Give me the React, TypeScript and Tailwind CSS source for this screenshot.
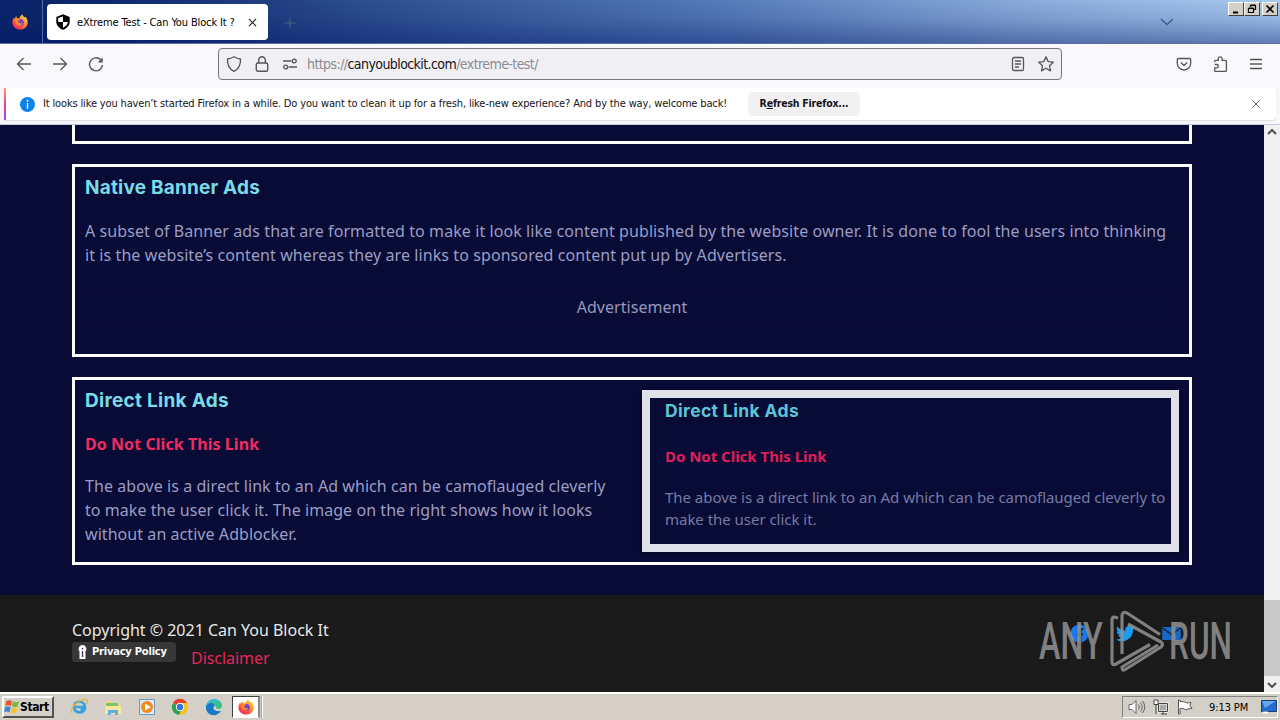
import React from "react";

const ui = "font-['DejaVu_Sans_Condensed','DejaVu_Sans',sans-serif] [font-stretch:condensed]";

function Firefox({ className }: { className: string }) {
  return (
    <svg viewBox="0 0 16 16" className={className}>
      <defs>
        <linearGradient id="ffBody" x1="0.9" y1="0" x2="0.2" y2="1">
          <stop offset="0" stopColor="#ffe14a" />
          <stop offset="0.4" stopColor="#ff9a2a" />
          <stop offset="0.75" stopColor="#ff4a3c" />
          <stop offset="1" stopColor="#e8206e" />
        </linearGradient>
      </defs>
      <path d="M8 15.6C3.7 15.6.4 12.500.4 8.300c0-1.900.7-3.700 1.700-4.700l.5 1.300C3 3.600 3.800 2.600 4.500 2.200l.4 1.700 2.300.5C8 2.600 9 1.200 10.500.2c.2 1.900 1.200 2.300 2 3.100l.8-.6c1.500 1.500 2.400 3.500 2.400 5.700 0 4.200-3.400 7.200-7.700 7.200z" fill="url(#ffBody)" />
      <circle cx="8.300" cy="8.600" r="3.500" fill="#7a3fd0" />
      <path d="M3.600 5.400c1.600-1 3.100-.6 4.500.2-.3.9-1.800 1-1.900 1.900 0 1.800 2.500 2.500 4.200 1.200-.4 2.300-2.600 3.300-4.600 2.600C3.800 10.500 3 7.900 3.600 5.400z" fill="#ff8a1f" />
    </svg>
  );
}

function WinButton({ children }: { children: React.ReactNode }) {
  return (
    <div className="flex h-[14px] w-4 items-center justify-center border border-t-white border-l-white border-r-[#404040] border-b-[#404040] bg-[#d4d0c8]">
      <svg viewBox="0 0 12 12" className="h-3 w-3 shrink-0" fill="none" stroke="#000">
        {children}
      </svg>
    </div>
  );
}

function TabBar() {
  return (
    <div className="flex h-11 shrink-0 items-start border-b border-[#5a6da0] bg-[linear-gradient(180deg,rgba(255,255,255,0)_0%,rgba(0,20,90,0.12)_45%,rgba(0,20,100,0.42)_100%),linear-gradient(90deg,#0a246a_0%,#0d276d_8%,#2a4b8d_27%,#5379b8_55%,#89abdb_80%,#a6caf0_100%)]">
      <div className="flex h-[43px] w-[43px] items-center border-r border-[#5468a0] pl-3">
        <Firefox className="h-4 w-4" />
      </div>
      <div className="mt-1 ml-1 flex h-9 w-[221px] items-center rounded bg-white pl-2">
        <svg viewBox="0 0 16 16" className="h-4 w-4 shrink-0">
          <path d="M8 .3l6.700 2.600v4.600c0 4-2.700 6.800-6.700 8.300-4-1.500-6.700-4.300-6.700-8.300V2.900z" fill="#000" />
          <path d="M8 2.400V8H3.200V4.100zM8 8h4.800c-.3 2.800-2.200 4.700-4.800 5.800z" fill="#fff" />
        </svg>
        <span className={`${ui} ml-[6px] w-[159px] pt-[2px] text-[11px] tracking-[-0.14px] whitespace-nowrap text-black`}>eXtreme Test - Can You Block It ?</span>
        <svg viewBox="0 0 10 10" className="ml-[12px] h-[9px] w-[9px]" stroke="#222" strokeWidth="1.200">
          <path d="M1 1l8 8M9 1L1 9" />
        </svg>
      </div>
      <svg viewBox="0 0 12 12" className="mt-[17px] ml-4 h-3 w-3" stroke="#4c6283">
        <path d="M6 .5v11M.5 6h11" />
      </svg>
      <svg viewBox="0 0 14 8" className="mt-[18px] ml-auto h-2 w-[14px]" fill="none" stroke="#3f5d8d" strokeWidth="1.500">
        <path d="M1 1l6 5.500L13 1" />
      </svg>
      <div className="mt-[2px] mr-[2px] ml-[54px] flex">
        <WinButton><path d="M3 9.500h5" strokeWidth="2" /></WinButton>
        <WinButton><path d="M4.500 4V2.500h5v4H8M4.500 2.200h5M2.500 5.500h5v4h-5zM2.500 5h5" strokeWidth="1.200" /></WinButton>
        <div className="w-[2px]" />
        <WinButton><path d="M2.500 2.500l7 7M9.500 2.500l-7 7" strokeWidth="1.700" /></WinButton>
      </div>
    </div>
  );
}

const line = "h-4 w-4 shrink-0 overflow-visible fill-none stroke-[#55555d]";

function Toolbar() {
  return (
    <div className="flex h-[44px] shrink-0 items-start bg-[#f9f9fb] pt-1">
      <div className="flex h-8 items-center">
        <svg viewBox="0 0 16 16" className={`${line} ml-4`} strokeWidth="1.300"><path d="M15 8H1.500M7.500 2l-6 6 6 6" /></svg>
        <svg viewBox="0 0 16 16" className={`${line} ml-5`} strokeWidth="1.300"><path d="M1 8h13.500M8.500 2l6 6-6 6" /></svg>
        <svg viewBox="0 0 16 16" className={`${line} ml-5`} strokeWidth="1.400"><path d="M14.500 9A6.500 6.500 0 1 1 12.700 3.800" /><path d="M14.700 1.500v5H9.700z" fill="#55555d" stroke="none" /></svg>
        <div className="ml-[114px] flex h-8 w-[844px] items-center rounded border border-[#77777d] bg-[#f0f0f4] pl-[7px]">
          <svg viewBox="0 0 16 16" className={line} strokeWidth="1.300"><path d="M8 .8c2 1.300 4 2 6.500 2.200.3 6-1.500 10-6.500 12.300C3 13 1.200 9 1.500 3 4 2.800 6 2.100 8 .8z" strokeLinejoin="round" /></svg>
          <svg viewBox="0 0 16 16" className={`${line} ml-3`} strokeWidth="1.400"><rect x="2.300" y="7" width="11.400" height="8.200" rx="1.500" /><path d="M4.700 7V4.300a3.300 3.500 0 0 1 6.600 0V7" /></svg>
          <svg viewBox="0 0 16 16" className={`${line} ml-3`} strokeWidth="1.300"><path d="M1 5h8.500M6.500 11H15" /><circle cx="12.300" cy="5" r="1.900" /><circle cx="3.700" cy="11" r="1.900" /></svg>
          <span className={`${ui} ml-[9px] text-[14px] leading-5 tracking-[-0.58px] whitespace-nowrap text-[#8b8b91]`}>
            https://<span className="text-[#15141a]">canyoublockit.com</span>/extreme-test/
          </span>
          <svg viewBox="0 0 16 16" className={`${line} mr-3 ml-auto`} strokeWidth="1.300"><rect x="2.500" y="1.500" width="11" height="13" rx="1.500" /><path d="M5 5h6M5 8h6M5 11h4" /></svg>
          <svg viewBox="0 0 16 16" className={`${line} mr-[7px]`} strokeWidth="1.300"><path d="M8 .9l2.200 4.700 5.100.6-3.800 3.500 1 5.200L8 12.300l-4.500 2.600 1-5.200L.7 6.200l5.100-.6z" strokeLinejoin="round" /></svg>
        </div>
        <svg viewBox="0 0 16 16" className={`${line} ml-[114px]`} strokeWidth="1.300"><path d="M2.500 2.500h11q1.200 0 1.200 1.200v3.600a6.700 6.700 0 0 1-13.400 0V3.700q0-1.200 1.200-1.200zM4.800 6.500L8 9.500l3.200-3" strokeLinejoin="round" /></svg>
        <svg viewBox="0 0 16 16" className={`${line} ml-[21px]`} strokeWidth="1.300"><path d="M1.700 6.200V5.300q0-1 1-1h2.600V2.700a1.900 1.900 0 0 1 3.800 0v1.600h3.300q1 0 1 1v9.100q0 1-1 1H2.700q-1 0-1-1v-2.600h2a1.600 1.600 0 0 0 0-3.300h-2" /></svg>
        <svg viewBox="0 0 16 16" className={`${line} ml-[19px]`} strokeWidth="1.300"><path d="M2 3.500h12M2 8h12M2 12.500h12" /></svg>
      </div>
    </div>
  );
}

function Notification() {
  return (
    <div className="flex h-[37px] shrink-0 items-start border-b border-[#c4cbe0] bg-[#f7f7f9] pl-1">
      <div className="flex h-8 w-[1272px] items-center rounded-r bg-white shadow-[0_1px_1px_#ddd]">
        <div className="h-8 w-[2px] bg-[linear-gradient(#ff9a5a,#e0419c,#9b4fe0)]" />
        <svg viewBox="0 0 16 16" className="ml-[14px] h-[15px] w-[15px]"><circle cx="8" cy="8" r="8" fill="#0a84e8" /><path d="M8 3v2M8 6.500v6" stroke="#fff" strokeWidth="1.400" /></svg>
        <span className={`${ui} ml-2 w-[684px] text-[11px] tracking-[-0.148px] whitespace-nowrap text-[#15141a]`}>
          It looks like you haven’t started Firefox in a while. Do you want to clean it up for a fresh, like-new experience? And by the way, welcome back!
        </span>
        <div className={`${ui} ml-[21px] flex h-6 w-28 items-center justify-center rounded bg-[#f0f0f1] text-[10.500px] font-bold tracking-[-0.22px] whitespace-nowrap text-[#15141a]`}>
          R<span className="underline">e</span>fresh Firefox...
        </div>
        <svg viewBox="0 0 10 10" className="mr-4 ml-auto h-2 w-2" stroke="#5b5b66" strokeWidth="1.200"><path d="M.5.5l9 9M9.500.5l-9 9" /></svg>
      </div>
    </div>
  );
}

const heading = "font-[Inter,sans-serif] font-bold whitespace-nowrap";
const body = "font-['Noto_Sans',sans-serif]";

function Watermark() {
  return (
    <svg viewBox="0 0 200 70" className="absolute top-[10px] left-[1035px] h-[70px] w-[200px]" opacity="0.85">
      <g fill="#929292" fontFamily="Roboto, sans-serif" fontSize="52" fontWeight="500">
        <text transform="translate(4 54) scale(0.6 1)" textLength="106" lengthAdjust="spacingAndGlyphs">ANY</text>
        <text transform="translate(134 54) scale(0.6 1)" textLength="105" lengthAdjust="spacingAndGlyphs">RUN</text>
      </g>
      <g fill="none" stroke="#929292" strokeWidth="3.200" strokeLinejoin="round">
        <path d="M83 13l-4-1q-2 0-2 3v42q0 4 4 2l34-19.500" />
        <path d="M87 49V11q0-5 5-3l33 21.500M93 19l33 18q3 2 0 5L91 64q-4 3-4-2l36-22" />
      </g>
    </svg>
  );
}

function Footer() {
  return (
    <div className="relative mt-[30px] flex h-[97px] flex-col bg-[#1a1a1a] pt-[23px] pl-[72px]">
      <div className={`${body} h-6 text-base leading-6 tracking-[-0.01px] text-[#e8e8e8]`}>Copyright © 2021 Can You Block It</div>
      <div className="flex">
        <div className="flex h-5 w-[104px] items-center rounded-[3px] bg-[#373737] pl-[6px]">
          <svg viewBox="0 0 9 14" className="h-[14px] w-[9px]"><path d="M4.500 0a4 4 0 0 1 3 6.500V14h-6V6.500a4 4 0 0 1 3-6.500z" fill="#fff" /><path d="M4.500 3v1.500M4.500 6v6" stroke="#373737" strokeWidth="1.300" /></svg>
          <span className={`${ui} ml-[5px] pt-px text-[11px] font-bold tracking-[-0.2px] whitespace-nowrap text-white`}>Privacy Policy</span>
        </div>
        <span className={`${body} mt-1 ml-[15px] text-base leading-6 tracking-[-0.05px] text-[#e3275b]`}>Disclaimer</span>
      </div>
      <div className="absolute top-[29px] left-[1070px] flex items-center gap-[27px]">
        <svg viewBox="0 0 20 20" className="h-[19px] w-[19px]"><circle cx="10" cy="10" r="9.500" fill="#1877f2" /><path d="M11 19v-8h2.500M7.500 11H11V8q0-3 3-2.800" stroke="#1a1a1a" strokeWidth="2.200" fill="none" /></svg>
        <svg viewBox="0 0 24 24" className="h-[19px] w-[19px]"><path fill="#1d9bf0" d="M24 4.600a10 10 0 0 1-2.800.8 5 5 0 0 0 2.100-2.700 10 10 0 0 1-3.100 1.200 4.900 4.900 0 0 0-8.400 4.500A14 14 0 0 1 1.700 3.200a4.900 4.900 0 0 0 1.500 6.500 5 5 0 0 1-2.200-.6 4.900 4.900 0 0 0 3.900 4.900 5 5 0 0 1-2.200.1 4.900 4.900 0 0 0 4.600 3.400A9.900 9.900 0 0 1 0 19.500 14 14 0 0 0 21.500 7c1-.7 1.800-1.500 2.500-2.400z" /></svg>
        <svg viewBox="0 0 20 14" className="h-[13px] w-[19px]"><path d="M0 0h20v14H0z" fill="#1668c4" /><path d="M0 1l10 7 10-7" stroke="#1a2b45" strokeWidth="1.800" fill="none" /></svg>
      </div>
      <Watermark />
    </div>
  );
}

function Page() {
  return (
    <div className="flex h-[567px] shrink-0 overflow-hidden bg-[#080b35]">
      <div className="w-[1264px]">
        <div className="mx-[72px] h-[19px] border-[3px] border-t-0 border-white" />
        <section className="mx-[72px] mt-5 h-[193px] border-[3px] border-white px-[10px] pt-2">
          <h2 className={`${heading} text-[19px] leading-[26px] tracking-[0.2px] text-[#79dbe8]`}>Native Banner Ads</h2>
          <p className={`${body} mt-[18px] text-base leading-6 tracking-[0.085px] whitespace-nowrap text-[#9b9dc4]`}>
            A subset of Banner ads that are formatted to make it look like content published by the website owner. It is done to fool the users into thinking<br />
            it is the website’s content whereas they are links to sponsored content put up by Advertisers.
          </p>
          <div className={`${body} mt-[23px] flex h-[34px] items-center justify-center rounded border border-[#080a2d] text-base tracking-[0.04px] text-[#9698bb]`}>Advertisement</div>
        </section>
        <section className="mx-[72px] mt-5 flex h-[188px] justify-between border-[3px] border-white pr-[10px] pl-[10px]">
          <div className="pt-2">
            <h2 className={`${heading} text-[19px] leading-[26px] tracking-[0.28px] text-[#79dbe8]`}>Direct Link Ads</h2>
            <div className={`${body} mt-[18px] text-base leading-6 font-bold tracking-[0.06px] text-[#f02b60]`}>Do Not Click This Link</div>
            <p className={`${body} mt-[18px] text-base leading-6 tracking-[0.06px] whitespace-nowrap text-[#9b9dc4]`}>
              The above is a direct link to an Ad which can be camoflauged cleverly<br />
              to make the user click it. The image on the right shows how it looks<br />
              without an active Adblocker.
            </p>
          </div>
          <div className="mt-[10px] h-[162px] w-[537px] border-8 border-[#e0e1e8] bg-[#080b35] pl-[15px] shadow-[0_2px_5px_rgba(0,0,0,0.4)]">
            <h2 className={`${heading} pt-px text-[17.500px] leading-6 tracking-[0.36px] text-[#5cc5d8]`}>Direct Link Ads</h2>
            <div className={`${body} mt-[22px] text-[15px] leading-[22px] font-bold tracking-[-0.02px] text-[#de1f5b]`}>Do Not Click This Link</div>
            <p className={`${body} mt-[19px] text-[15px] leading-[22px] tracking-[-0.03px] whitespace-nowrap text-[#777aa5]`}>
              The above is a direct link to an Ad which can be camoflauged cleverly to<br />make the user click it.
            </p>
          </div>
        </section>
        <Footer />
      </div>
      <div className="flex w-4 flex-col items-center bg-[#f0f0f0]">
        <svg viewBox="0 0 10 6" className="mt-1 h-[6px] w-[10px]" fill="none" stroke="#505050" strokeWidth="2"><path d="M1 5l4-4 4 4" /></svg>
        <div className="mt-[465px] h-[76px] w-4 bg-[#c9c9c9]" />
        <svg viewBox="0 0 10 6" className="mt-[6px] h-[6px] w-[10px]" fill="none" stroke="#505050" strokeWidth="2"><path d="M1 1l4 4 4-4" /></svg>
      </div>
    </div>
  );
}

function Taskbar() {
  const icon = "h-[18px] w-[18px] shrink-0";
  return (
    <div className="flex h-7 shrink-0 items-center border-t-2 border-white bg-[#d4d0c8] pl-[2px]">
      <div className={`${ui} flex h-[22px] w-[52px] items-center border-2 border-t-white border-l-white border-r-[#55534f] border-b-[#55534f] text-[12px] font-bold tracking-[-0.4px] text-black`}>
        <svg viewBox="0 0 16 16" className="h-4 w-4 shrink-0">
          <path d="M2.500 2q3-1.500 5.500 0L7 7Q4 5.500 1.300 7z" fill="#e8562a" />
          <path d="M9 2.300q3 1.700 6 0L13.700 7.500Q11 9 8 7.300z" fill="#7cb83a" />
          <path d="M1 8.200q3-1.500 5.700 0l-1.200 5q-3-1.500-5.300 0z" fill="#3b86d8" />
          <path d="M7.700 8.500q3 1.500 5.800 0l-1.300 5q-3 1.700-5.700 0z" fill="#f5c52c" />
        </svg>
        <span>Start</span>
      </div>
      <svg viewBox="0 0 18 18" className={`${icon} ml-4`}>
        <path d="M3.500 9h11.300c0-7-10.800-7-10.800 0 0 6 8 7 10.500 2.500h-4" fill="none" stroke="#36a2e2" strokeWidth="2.700" />
        <path d="M2 15C-1 9 13-1 17 2c1 1 0 3-1 4" fill="none" stroke="#e8b83a" strokeWidth="1.300" />
      </svg>
      <svg viewBox="0 0 18 18" className={`${icon} ml-4`}>
        <path d="M1 3h6l1.500 2H16v10H1z" fill="#f3d67a" />
        <path d="M2 5h12v3H2z" fill="#7ec46a" /><path d="M1 8h16v8H1z" fill="#f8e6a0" />
        <path d="M4 17v-5h10v5h-3v-2H7v2z" fill="#5fb0df" />
      </svg>
      <svg viewBox="0 0 18 18" className={`${icon} ml-4`}>
        <path d="M1.500 1.500h15v15h-15z" fill="#d9e9f5" stroke="#6a9ac4" />
        <circle cx="9" cy="9" r="6" fill="#f28a1d" /><path d="M7 5.500l6 3.500-6 3.500z" fill="#fff" />
      </svg>
      <svg viewBox="0 0 18 18" className={`${icon} ml-[15px]`}>
        <path d="M9 9L2 5a8 8 0 0 1 14 0z" fill="#e34133" /><path d="M9 9l-7-4a8 8 0 0 0 6 12l4-7z" fill="#2da24f" />
        <path d="M9 5h7a8 8 0 0 1-8 12l4.500-7z" fill="#fbc116" /><circle cx="9" cy="9" r="4.200" fill="#fff" /><circle cx="9" cy="9" r="3.200" fill="#2f76e8" />
      </svg>
      <svg viewBox="0 0 18 18" className={`${icon} ml-4`}>
        <path d="M1 9C1-1 17-1 17 8c0 3-4 4-6 2 0-5-6-5-10-1z" fill="#39c08a" /><path d="M1 8c2-4 8-4 9 0-3 1-2 6 6 5-4 7-16 5-15-5z" fill="#1679c7" />
        <path d="M1 8C3 0 12-1 15 4 10 2 6 3 1 8z" fill="#35b9e0" />
      </svg>
      <div className="ml-[9px] flex h-[22px] w-[28px] items-center justify-center border border-t-[#404040] border-r-2 border-l-[#404040] border-r-[#888] border-b-white bg-white">
        <Firefox className="h-4 w-4" />
      </div>
      <div className="ml-px h-[22px] w-[2px] border-r border-white bg-[#aaa69e]" />
      <div className="mr-[2px] ml-auto flex h-[22px] w-[156px] items-center border border-t-[#808080] border-l-[#808080] border-r-white border-b-white">
        <svg viewBox="0 0 18 16" className="ml-[5px] h-4 w-[18px]" fill="#fff" stroke="#666"><path d="M1 5.500h3l4-4v13l-4-4H1z" /><path d="M10.500 5.500q2 2.500 0 5M12.500 3.500q3.500 4.500 0 9M14.500 2q4.500 6 0 12" fill="none" /></svg>
        <svg viewBox="0 0 16 16" className="ml-[7px] h-4 w-4" fill="none" stroke="#444"><path d="M5.500 4.500h9v8h-9z" fill="#aaa" stroke="#fff" strokeWidth="2" /><path d="M5.500 4.500h9v8h-9zM8 15h6M10 13v2" /><path d="M1 1v4.500h4V1M3 5.500V15M1 1h4" fill="#fff" /></svg>
        <svg viewBox="0 0 16 16" className="ml-[8px] h-4 w-4" fill="#fff" stroke="#555"><path d="M1.500 1v14h1.500V9.500c4-1 5 2 7 1 1-1 3-1 5-1l-2-3 1-3c-3 0-3 1-5 0s-3-1-6-1V1z" /></svg>
        <span className={`${ui} ml-4 pt-[2px] text-[11px] tracking-[-0.1px] whitespace-nowrap text-black`}>9:13 PM</span>
        <svg viewBox="0 0 16 14" className="mr-0 ml-auto h-[14px] w-4"><path d="M.5.5h15v11H.5z" fill="#246bcb" stroke="#1a3c70" /><path d="M1 1h14L4 8z" fill="#65a9ed" /><path d="M2 12.500h5" stroke="#fff" strokeWidth="2" /></svg>
      </div>
    </div>
  );
}

export default function App() {
  return (
    <div className="flex h-[720px] w-[1280px] flex-col overflow-hidden">
      <TabBar />
      <Toolbar />
      <Notification />
      <Page />
      <Taskbar />
    </div>
  );
}
